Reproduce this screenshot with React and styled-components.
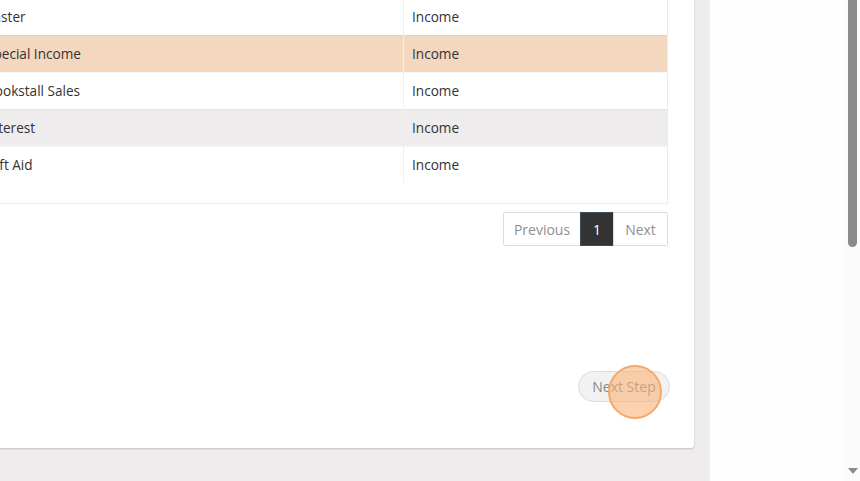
import React from "react";
import styled, { createGlobalStyle } from "styled-components";

const Global = createGlobalStyle`
  html, body { margin: 0; padding: 0; }
  body { font-family: "Open Sans", "Noto Sans", sans-serif; background: #fdfdfd; overflow: hidden; }
`;

const Page = styled.div`
  display: flex;
  width: 860px;
  height: 481px;
  overflow: hidden;
`;

const Main = styled.div`
  position: relative;
  width: 710px;
  height: 481px;
  background: #eeeced;
  overflow: hidden;
  flex: none;
`;

const Card = styled.div`
  position: relative;
  margin-left: -49px;
  margin-top: -3px;
  width: 743px;
  box-sizing: border-box;
  background: #fff;
  border-radius: 0 0 3px 0;
  box-shadow: 0 1px 2px rgba(0, 0, 0, 0.18);
  padding: 0 26px 46px 26px;
  display: flex;
  flex-direction: column;
`;

const TableWrap = styled.div`
  border: 1px solid #ececec;
  padding-bottom: 20px;
`;

const Row = styled.div`
  display: grid;
  grid-template-columns: 425px 1fr;
  height: 37px;
  background: ${(p) => p.$bg || "#fff"};
  box-shadow: inset 0 1px 0 rgba(0, 0, 0, 0.03);
`;

const Cell = styled.div`
  display: flex;
  align-items: center;
  padding: 0 8px;
  font-size: 13.6px;
  color: #333;
  white-space: nowrap;
  border-left: ${(p) => (p.$divider ? "1px solid #f0eeee" : "none")};
`;

const Pager = styled.div`
  display: flex;
  justify-content: flex-end;
  margin-top: 8px;
`;

const PageBtn = styled.div`
  width: ${(p) => p.$w}px;
  height: 34px;
  box-sizing: border-box;
  display: flex;
  align-items: center;
  justify-content: center;
  font-size: 14px;
  color: ${(p) => (p.$active ? "#fff" : "#8f8f8f")};
  background: ${(p) => (p.$active ? "#333" : "#fff")};
  border: 1px solid ${(p) => (p.$active ? "#37505c" : "#dddddd")};
  margin-left: -1px;
  &:first-child { border-radius: 2px 0 0 2px; }
  &:last-child { border-radius: 0 2px 2px 0; }
`;

const Footer = styled.div`
  display: flex;
  justify-content: flex-end;
  margin-top: 125px;
  margin-right: -2px;
`;

const NextStep = styled.div`
  position: relative;
  width: 92px;
  height: 31px;
  box-sizing: border-box;
  border-radius: 16px;
  background: #f2f2f2;
  border: 1px solid #dcdcdc;
  color: #888;
  font-size: 14px;
  display: flex;
  align-items: center;
  justify-content: center;
`;

const Click = styled.div`
  position: absolute;
  left: 29px;
  top: -7px;
  width: 54px;
  height: 54px;
  box-sizing: border-box;
  border-radius: 50%;
  border: 2px solid #f5a868;
  background: rgba(249, 178, 120, 0.6);
`;

const Side = styled.div`
  flex: 1;
  height: 481px;
  background: #fdfdfd;
  display: flex;
  justify-content: flex-end;
`;

const Scrollbar = styled.div`
  width: 15px;
  height: 481px;
  background: #fbfbfb;
  position: relative;
  display: flex;
  flex-direction: column;
  align-items: center;
`;

const Thumb = styled.div`
  width: 9px;
  height: 247px;
  background: #8a8a8a;
  border-radius: 0 0 5px 5px;
`;

const Arrow = styled.div`
  position: absolute;
  bottom: 7px;
  left: 3px;
  width: 0;
  height: 0;
  border-left: 5px solid transparent;
  border-right: 5px solid transparent;
  border-top: 6px solid #8a8a8a;
`;

const rows = [
  { name: "Easter", type: "Income" },
  { name: "Special Income", type: "Income", bg: "#f3d7bf" },
  { name: "Bookstall Sales", type: "Income" },
  { name: "Interest", type: "Income", bg: "#eeeced" },
  { name: "Gift Aid", type: "Income" },
];

export default function App() {
  return (
    <>
      <Global />
      <Page>
        <Main>
          <Card>
            <TableWrap>
              {rows.map((r) => (
                <Row key={r.name} $bg={r.bg}>
                  <Cell>{r.name}</Cell>
                  <Cell $divider>{r.type}</Cell>
                </Row>
              ))}
            </TableWrap>
            <Pager>
              <PageBtn $w={78}>Previous</PageBtn>
              <PageBtn $w={34} $active>1</PageBtn>
              <PageBtn $w={55}>Next</PageBtn>
            </Pager>
            <Footer>
              <NextStep>
                Next Step
                <Click />
              </NextStep>
            </Footer>
          </Card>
        </Main>
        <Side>
          <Scrollbar>
            <Thumb />
            <Arrow />
          </Scrollbar>
        </Side>
      </Page>
    </>
  );
}
